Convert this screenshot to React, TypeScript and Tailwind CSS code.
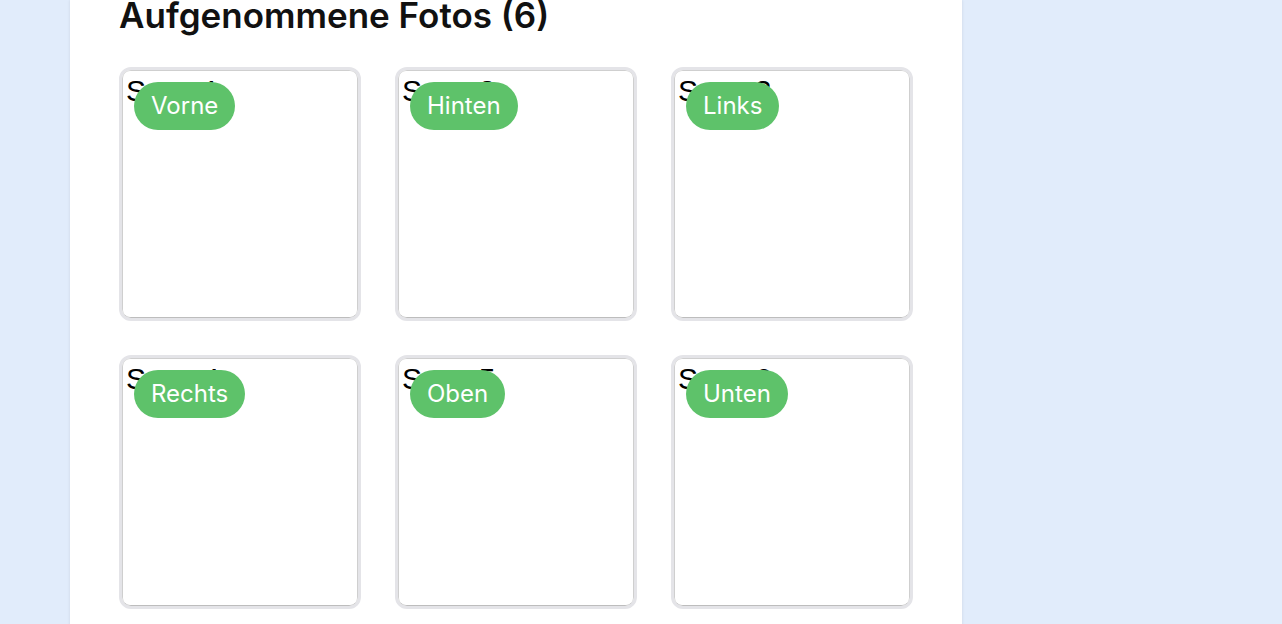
const photos = [
  { id: 1, label: "Vorne" },
  { id: 2, label: "Hinten" },
  { id: 3, label: "Links" },
  { id: 4, label: "Rechts" },
  { id: 5, label: "Oben" },
  { id: 6, label: "Unten" },
];

function PhotoCard({ id, label }: { id: number; label: string }) {
  return (
    <div className="relative h-[254px] w-[242px] overflow-hidden rounded-xl border-[3px] border-[#e4e4e8] bg-white">
      {/* image placeholder, alt text sits under the badge */}
      <div className="h-full w-full rounded-lg border border-[#cfcfcf] border-b-[#bdbdbd] px-[3px] pt-[4px]">
        <span className="font-['Liberation_Sans',Arial,sans-serif] text-[30px] leading-[32px] text-black">
          Scan {id}
        </span>
      </div>
      <span className="absolute left-3 top-3 flex h-12 items-center rounded-full bg-[#5ec26a] px-[17px] font-['Inter',sans-serif] text-[24px] text-white">
        {label}
      </span>
    </div>
  );
}

export default function App() {
  return (
    <div className="h-[624px] overflow-hidden bg-[#e1ecfb] font-['Inter',sans-serif]">
      <div className="ml-[70px] flex h-[700px] w-[892px] flex-col bg-white px-[49px] shadow-[0_0_3px_rgba(0,0,0,0.1)]">
        <h2 className="-mt-[6px] mb-[31px] text-[35px] font-semibold leading-[42px] text-[#111]">
          Aufgenommene Fotos ({photos.length})
        </h2>
        <div className="grid grid-cols-[repeat(3,242px)] gap-[34px]">
          {photos.map((p) => (
            <PhotoCard key={p.id} id={p.id} label={p.label} />
          ))}
        </div>
      </div>
    </div>
  );
}
